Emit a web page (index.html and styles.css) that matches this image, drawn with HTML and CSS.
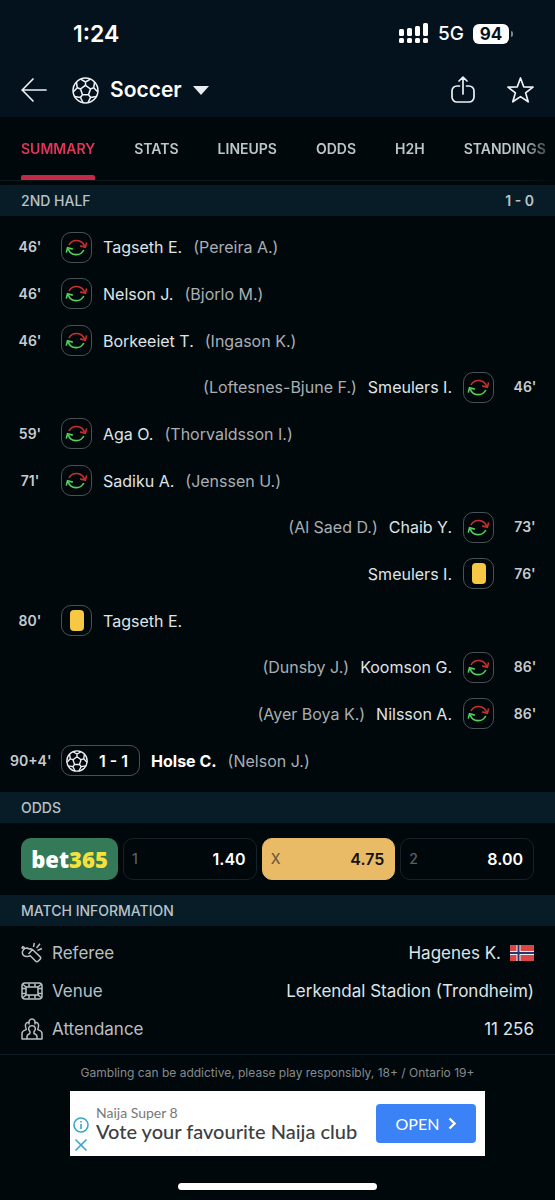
FILE: index.html
```html
<!DOCTYPE html>
<html lang="en">
  <head>
    <meta charset="UTF-8" />
    <meta name="viewport" content="width=device-width, initial-scale=1.0" />
    <title>Soccer - Match Summary</title>
    <link rel="stylesheet" href="styles.css">
  </head>
  <body>
    <!-- shared icons -->
    <svg class="sprite" aria-hidden="true">
      <symbol id="ball" viewBox="0 0 26 26">
        <circle cx="13" cy="13" r="12" />
        <path d="M13 8l4.800 3.500-1.900 5.600h-5.800l-1.900-5.600zM13 8V5M17.800 11.500l3-1.100M15.900 17.100l2 2.600M10.100 17.100l-2 2.600M8.200 11.500l-3-1.100M8.300 2.100L13 4.800l4.700-2.700M21.800 4.800l-.9 5.600 4 4.100M23.500 18.800l-5.600.9-2.600 5.100M2.500 18.800l5.600.9 2.600 5.100M4.200 4.800l.9 5.600-4 4.100" />
      </symbol>
      <symbol id="swap" viewBox="0 0 29 29">
        <path class="out" d="M7 12A8.500 8.500 0 0 1 22.500 13M24.600 9.400l-1.200 4.800-5.200-1.300" />
        <path class="in" d="M21.800 17A8.500 8.500 0 0 1 6.200 16M4.300 19.600l1.200-4.800 5.300 1.300" />
      </symbol>
    </svg>

    <header class="top">
      <div class="status-bar">
        <span class="clock">1:24</span>
        <div class="signals">
          <svg class="bars" width="30" height="21" viewBox="0 0 30 21">
            <rect x="0" y="6" width="5" height="7" rx="1.5" />
            <rect x="8" y="5" width="5" height="8" rx="1.5" />
            <rect x="16" y="3" width="5" height="10" rx="1.5" />
            <rect x="24" y="0" width="5" height="13" rx="1.5" />
            <rect x="0" y="15" width="5" height="5" rx="1.5" />
            <rect x="8" y="15" width="5" height="5" rx="1.5" />
            <rect x="16" y="15" width="5" height="5" rx="1.5" />
            <rect x="24" y="15" width="5" height="5" rx="1.5" />
          </svg>
          <span class="network">5G</span>
          <span class="battery">94</span>
        </div>
      </div>
      <div class="title-bar">
        <button class="icon-btn" aria-label="Back">
          <svg width="27" height="26" viewBox="0 0 27 26"><path d="M25 13H1M12 2L1.200 13 12 24" /></svg>
        </button>
        <button class="sport">
          <svg class="ball" width="27" height="27"><use href="#ball" /></svg>
          Soccer
          <svg width="16" height="9" viewBox="0 0 16 9"><path d="M0 0h16L8 9z" fill="#e9edf0" /></svg>
        </button>
        <button class="icon-btn share" aria-label="Share">
          <svg width="24" height="28" viewBox="0 0 24 28"><path d="M8.500 10H6a5 5 0 0 0-5 5v6a5 5 0 0 0 5 5h12a5 5 0 0 0 5-5v-6a5 5 0 0 0-5-5h-2.500M12 18V1.500M8 5l4-3.800L16 5" /></svg>
        </button>
        <button class="icon-btn" aria-label="Add to favourites">
          <svg width="27" height="28" viewBox="0 0 27 28"><path d="M13.500 2l3.200 8.800 9.300.3-7.400 5.700 2.600 9-7.700-5.200-7.700 5.200 2.600-9L1 11.100l9.300-.3z" /></svg>
        </button>
      </div>
    </header>

    <nav class="tabs">
      <a href="#summary" class="active">SUMMARY</a>
      <a href="#stats">STATS</a>
      <a href="#lineups">LINEUPS</a>
      <a href="#odds">ODDS</a>
      <a href="#h2h">H2H</a>
      <a href="#standings">STANDINGS</a>
    </nav>

    <main>
      <section id="summary">
        <h2>2ND HALF <span>1 - 0</span></h2>
        <ul class="events">
          <li><time>46'</time><span class="badge"><svg><use href="#swap" /></svg></span><b>Tagseth E.</b><i>(Pereira A.)</i></li>
          <li><time>46'</time><span class="badge"><svg><use href="#swap" /></svg></span><b>Nelson J.</b><i>(Bjorlo M.)</i></li>
          <li><time>46'</time><span class="badge"><svg><use href="#swap" /></svg></span><b>Borkeeiet T.</b><i>(Ingason K.)</i></li>
          <li class="away"><time>46'</time><span class="badge"><svg><use href="#swap" /></svg></span><b>Smeulers I.</b><i>(Loftesnes-Bjune F.)</i></li>
          <li><time>59'</time><span class="badge"><svg><use href="#swap" /></svg></span><b>Aga O.</b><i>(Thorvaldsson I.)</i></li>
          <li><time>71'</time><span class="badge"><svg><use href="#swap" /></svg></span><b>Sadiku A.</b><i>(Jenssen U.)</i></li>
          <li class="away"><time>73'</time><span class="badge"><svg><use href="#swap" /></svg></span><b>Chaib Y.</b><i>(Al Saed D.)</i></li>
          <li class="away"><time>76'</time><span class="badge"><span class="card"></span></span><b>Smeulers I.</b></li>
          <li><time>80'</time><span class="badge"><span class="card"></span></span><b>Tagseth E.</b></li>
          <li class="away"><time>86'</time><span class="badge"><svg><use href="#swap" /></svg></span><b>Koomson G.</b><i>(Dunsby J.)</i></li>
          <li class="away"><time>86'</time><span class="badge"><svg><use href="#swap" /></svg></span><b>Nilsson A.</b><i>(Ayer Boya K.)</i></li>
          <li class="goal"><time>90+4'</time><span class="badge"><svg class="ball"><use href="#ball" /></svg>1 - 1</span><b>Holse C.</b><i>(Nelson J.)</i></li>
        </ul>
      </section>

      <section id="odds">
        <h2>ODDS</h2>
        <div class="odds">
          <a href="#bet365" class="bookmaker">bet<span>365</span></a>
          <button><small>1</small>1.40</button>
          <button class="picked"><small>X</small>4.75</button>
          <button><small>2</small>8.00</button>
        </div>
      </section>

      <section>
        <h2>MATCH INFORMATION</h2>
        <dl class="info">
          <div>
            <dt>
              <svg width="22" height="22" viewBox="0 0 22 22"><path d="M8 7.200C6 5 2.500 6.500 1.500 9.500c-.8 3.500 2.300 5.800 6 4.800l1.800-.6 5.200 5.300c.8.900 2 .9 2.900 0l1.600-1.600c.8-.8.8-2 0-2.800l-7.600-7.100L7.500 12M11.400 7.500L9.500 6.800 8 7.200M2.500 7L1 6l1-1.500 2 1.700M12.500 5l.8-4M15.500 6L19 1.800M16.500 8.500L21 6.500" /></svg>
              Referee
            </dt>
            <dd>
              Hagenes K.
              <svg width="24" height="16" viewBox="0 0 24 16">
                <path fill="#d94747" stroke="none" d="M0 0h24v16H0z" />
                <path stroke="#eceff5" stroke-width="4" d="M8.500 0v16M0 8h24" />
                <path stroke="#26376b" stroke-width="2" d="M8.500 0v16M0 8h24" />
              </svg>
            </dd>
          </div>
          <div>
            <dt>
              <svg width="22" height="22" viewBox="0 0 22 22"><rect x="1" y="3" width="20" height="16" rx="3" /><rect x="5" y="7" width="12" height="8" /><path d="M5 7L2 4.500M17 7l3-2.500M5 15l-3 2.500M17 15l3 2.500M8 3.500V7M14 3.500V7M8 15v3.500M14 15v3.500M1 8.500h4M1 13.500h4M17 8.500h4M17 13.500h4" /></svg>
              Venue
            </dt>
            <dd>Lerkendal Stadion (Trondheim)</dd>
          </div>
          <div>
            <dt>
              <svg width="22" height="22" viewBox="0 0 22 22"><path d="M8 6.500C7.500 3 8.700 1 11 1s3.500 2 3 5.500M8.700 5C5.500 3.500 3.500 6 4.700 9.500c.3.800.6 1.200.6 1.700 0 1.200-4.300.6-4.300 4.300V21h20v-5.500c0-3.700-4.300-3.100-4.300-4.300 0-.5.3-.9.600-1.700 1.200-3.500-.8-6-4-4.500M9 15.500v-1.700C6.500 11 7.500 7.800 11 7.800s4.500 3.200 2 6v1.700c1.500.7 3 1 3 3V21M9 15.500c-1.500.7-3 1-3 3V21" /></svg>
              Attendance
            </dt>
            <dd>11 256</dd>
          </div>
        </dl>
      </section>
    </main>

    <footer>
      <p>Gambling can be addictive, please play responsibly, 18+ / Ontario 19+</p>
      <div class="ad">
        <div class="ad-marks">
          <button aria-label="Ad info"><svg width="16" height="16" viewBox="0 0 16 16"><circle cx="8" cy="8" r="7" /><path d="M8 7v5M8 4v1.500" /></svg></button>
          <button aria-label="Close ad"><svg width="16" height="14" viewBox="0 0 16 14"><path d="M2.500 1.500l11 11M13.500 1.500l-11 11" /></svg></button>
        </div>
        <div class="ad-text">
          <span>Naija Super 8</span>
          <strong>Vote your favourite Naija club</strong>
        </div>
        <button class="open">
          OPEN
          <svg width="8" height="13" viewBox="0 0 8 13"><path d="M1.500 1.500l5 5-5 5" /></svg>
        </button>
      </div>
      <div class="home-indicator"></div>
    </footer>
  </body>
</html>
```

FILE: styles.css
```css
* {
  margin: 0;
  padding: 0;
  box-sizing: border-box;
}
body {
  font-family: Inter, Roboto, "Liberation Sans", sans-serif;
  font-size: 16px;
  line-height: 20px;
  background: #01080c;
  color: #dfe4e7;
}
button {
  font: inherit;
  color: inherit;
  background: none;
  border: none;
}
a {
  color: inherit;
  text-decoration: none;
}
svg {
  display: block;
  flex: none;
  fill: none;
  stroke: none;
}
.sprite {
  position: absolute;
  width: 0;
  height: 0;
}
.ball {
  stroke: #eef1f3;
  stroke-width: 1.5;
}

/* header */
.top {
  background: #03121d;
  color: #fff;
}
.status-bar {
  display: flex;
  justify-content: space-between;
  align-items: center;
  height: 63px;
  padding: 4px 46px 0 73px;
}
.clock {
  font-size: 23px;
  font-weight: 600;
}
.signals {
  display: flex;
  align-items: center;
  gap: 9px;
}
.bars {
  fill: #fff;
}
.network {
  font-size: 19px;
  font-weight: 500;
}
.battery {
  position: relative;
  width: 36px;
  border-radius: 6px;
  background: #fff;
  color: #03121d;
  font-size: 17px;
  font-weight: 700;
  text-align: center;
}
.battery::after {
  content: "";
  position: absolute;
  top: 7px;
  right: -4px;
  width: 2px;
  height: 6px;
  border-radius: 0 2px 2px 0;
  background: #7d868c;
}
.title-bar {
  display: flex;
  align-items: center;
  height: 54px;
  padding: 0 21px;
}
.icon-btn svg {
  stroke: #eef1f3;
  stroke-width: 1.7;
  stroke-linecap: round;
  stroke-linejoin: round;
}
.sport {
  display: flex;
  align-items: center;
  gap: 11px;
  margin: 0 auto 0 24px;
  font-size: 21px;
  font-weight: 600;
}
.share {
  margin-right: 32px;
}

/* tabs */
.tabs {
  display: flex;
  gap: 39px;
  height: 64px;
  padding-left: 21px;
  border-bottom: 1px solid #0d191f;
  overflow: hidden;
  font-size: 14px;
  font-weight: 600;
  color: #bfc5c9;
  -webkit-mask-image: linear-gradient(to right, #000 94%, transparent 101%);
  mask-image: linear-gradient(to right, #000 94%, transparent 101%);
}
.tabs a {
  position: relative;
  display: flex;
  align-items: center;
}
.tabs .active {
  color: #e03557;
}
.tabs .active::after {
  content: "";
  position: absolute;
  left: 0;
  right: 0;
  bottom: 0;
  height: 5px;
  border-radius: 2px 2px 0 0;
  background: #c22a45;
}

/* sections */
main {
  padding-top: 4px;
  border-bottom: 1px solid #0c1c25;
}
h2 {
  display: flex;
  justify-content: space-between;
  align-items: center;
  height: 31px;
  padding: 0 21px;
  background: #081c27;
  color: #b9c2c8;
  font-size: 14px;
  font-weight: 500;
}
h2 span {
  font-weight: 600;
}

/* events */
.events {
  display: grid;
  grid-auto-rows: 1fr;
  min-height: 576px;
  padding: 8px 10px;
  list-style: none;
}
.events li {
  display: flex;
  align-items: center;
  gap: 11px;
}
.events .away {
  flex-direction: row-reverse;
}
.events time {
  width: 40px;
  color: #c6ccd0;
  font-size: 14px;
  font-weight: 600;
  text-align: center;
}
.events b {
  font-weight: 400;
}
.events i {
  color: #a9afb3;
  font-style: normal;
}
.badge {
  display: flex;
  align-items: center;
  justify-content: center;
  min-width: 31px;
  height: 31px;
  border: 1px solid #4a5155;
  border-radius: 10px;
}
.badge svg {
  width: 29px;
  height: 29px;
  stroke-width: 1.6;
}
.out {
  stroke: #c9302c;
}
.in {
  stroke: #55d25a;
}
.card {
  width: 14px;
  height: 21px;
  border-radius: 4px;
  background: #f7c843;
}
.goal .badge {
  gap: 11px;
  padding: 0 11px 0 4px;
  color: #fff;
  font-weight: 600;
}
.goal .badge svg {
  width: 22px;
  height: 22px;
}
.goal b {
  color: #fff;
  font-weight: 700;
}

/* odds */
.odds {
  display: grid;
  grid-template-columns: 97px 1fr 1fr 1fr;
  gap: 5px;
  padding: 15px 21px;
}
.bookmaker {
  display: flex;
  align-items: center;
  justify-content: center;
  height: 42px;
  border-radius: 10px;
  background: #357a58;
  color: #fff;
  font-family: "Open Sans", "Noto Sans", sans-serif;
  font-size: 22px;
  font-weight: 800;
}
.bookmaker span {
  color: #f6e13c;
}
.odds button {
  display: flex;
  align-items: center;
  justify-content: space-between;
  padding: 0 10px 0 8px;
  border: 1px solid #16222a;
  border-radius: 10px;
  color: #fff;
  font-weight: 600;
}
.odds small {
  color: #596064;
  font-size: 14px;
  font-weight: 500;
}
.odds .picked {
  border-color: #e9bb67;
  background: #e9bb67;
  color: #14140f;
}
.picked small {
  color: #6e5e40;
}

/* match information */
.info {
  padding: 8px 21px 6px;
  font-size: 17px;
}
.info div {
  display: flex;
  justify-content: space-between;
  height: 38px;
}
.info dt,
.info dd {
  display: flex;
  align-items: center;
  gap: 9px;
}
.info dt {
  color: #b9bfc3;
}
.info dt svg {
  stroke: #b9bfc3;
  stroke-width: 1.5;
  stroke-linejoin: round;
}

/* footer */
footer {
  display: flex;
  flex-direction: column;
  align-items: center;
  padding: 8px 21px 10px;
}
footer p {
  color: #858b8f;
  font-size: 12px;
}
.ad {
  display: flex;
  align-items: center;
  width: 415px;
  max-width: 100%;
  height: 65px;
  margin: 8px 0 27px;
  padding: 0 9px 0 3px;
  background: #fff;
  font-family: Lato, "Open Sans", sans-serif;
}
.ad-marks {
  display: flex;
  flex-direction: column;
  align-self: flex-end;
  gap: 5px;
  padding-bottom: 4px;
}
.ad-marks svg {
  stroke: #3aa5c9;
  stroke-width: 1.6;
}
.ad-text {
  display: flex;
  flex-direction: column;
  flex: 1;
  padding: 0 0 4px 7px;
  line-height: 18px;
  white-space: nowrap;
}
.ad-text span {
  color: #777;
  font-size: 14px;
}
.ad-text strong {
  color: #3c4043;
  font-size: 20px;
  font-weight: 500;
}
.open {
  display: flex;
  align-items: center;
  justify-content: center;
  gap: 9px;
  width: 100px;
  height: 39px;
  border-radius: 4px;
  background: #3b82f6;
  color: #fff;
  font-size: 16px;
}
.open svg {
  stroke: #fff;
  stroke-width: 2.4;
}
.home-indicator {
  width: 199px;
  height: 7px;
  border-radius: 4px;
  background: #fff;
}
```
